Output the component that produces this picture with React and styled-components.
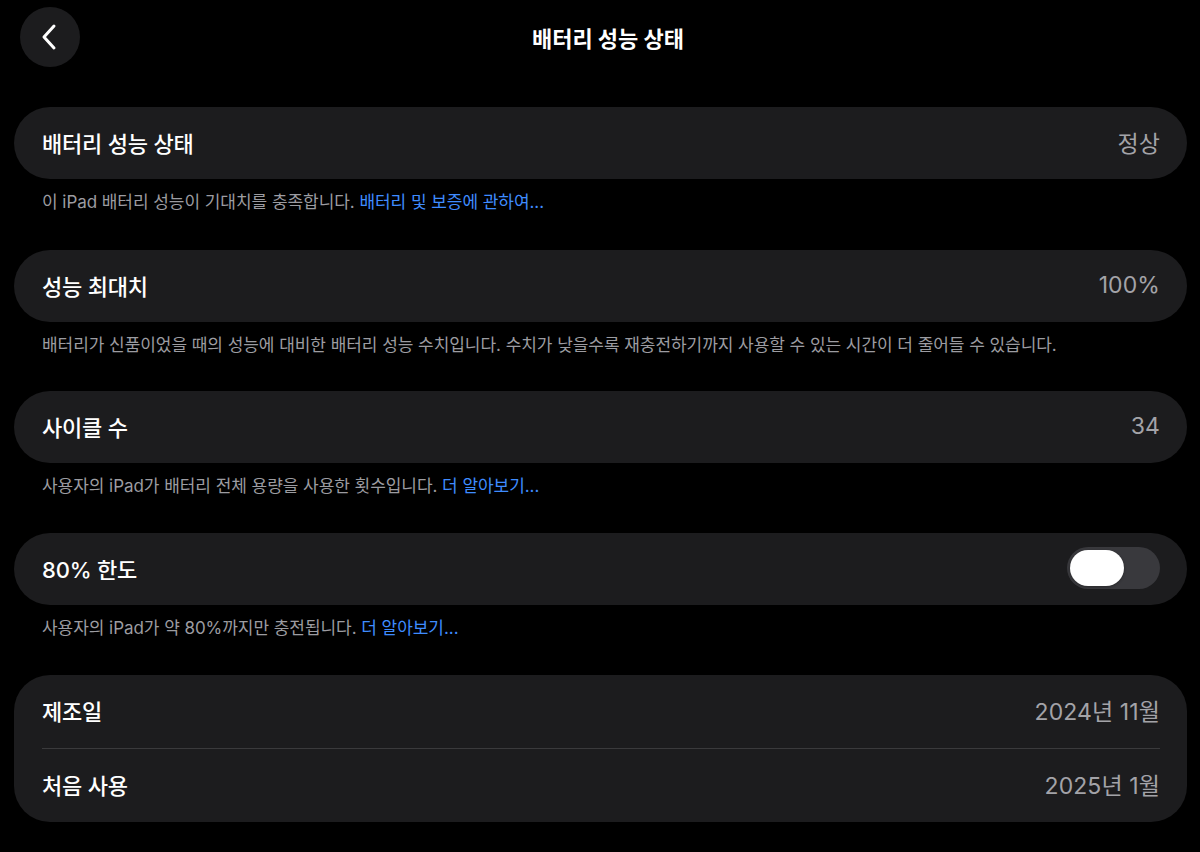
import React from "react";
import styled, { createGlobalStyle } from "styled-components";

const Global = createGlobalStyle`
  html, body { margin: 0; padding: 0; background: #000; }
  body {
    font-family: Inter, "Noto Sans CJK KR", sans-serif;
    color: #fff;
    -webkit-font-smoothing: antialiased;
  }
`;

const Page = styled.div`
  width: 1200px;
  height: 852px;
  background: #000;
  box-sizing: border-box;
  padding: 0 13px 0 14px;
  display: flex;
  flex-direction: column;
`;

const Header = styled.header`
  height: 74px;
  display: grid;
  grid-template-columns: 80px 1fr 80px;
  align-items: center;
`;

const BackButton = styled.button`
  width: 60px;
  height: 60px;
  margin-left: 6px;
  border-radius: 50%;
  border: none;
  background: #1c1c1e;
  display: flex;
  align-items: center;
  justify-content: center;
  padding: 0;
  cursor: pointer;
`;

const Title = styled.h1`
  margin: 0 0 0 15px;
  text-align: center;
  font-size: 22px;
  font-weight: 700;
  letter-spacing: 0;
`;

const Sections = styled.div`
  display: flex;
  flex-direction: column;
  padding-top: 33px;
`;

const Section = styled.section`
  display: flex;
  flex-direction: column;
  margin-bottom: ${(p) => p.$gap || 0}px;
`;

const Card = styled.div`
  background: #1c1c1e;
  border-radius: 36px;
  width: 1173px;
  display: flex;
  flex-direction: column;
  padding: 0 27px 0 28px;
  box-sizing: border-box;
`;

const Row = styled.div`
  height: ${(p) => p.$h || 72}px;
  display: flex;
  align-items: center;
  justify-content: space-between;
  border-top: ${(p) => (p.$divider ? "1px solid #3a3a3c" : "none")};
  box-sizing: border-box;
  padding-bottom: 3px;
`;

const Label = styled.span`
  font-size: 22px;
  font-weight: 500;
  color: #fff;
  letter-spacing: -0.2px;
`;

const Value = styled.span`
  font-size: 23px;
  font-weight: 400;
  color: #a3a3a8;
  letter-spacing: 0.1px;
`;

const Footer = styled.p`
  margin: 0;
  padding: 12px 28px 0;
  font-size: 17px;
  line-height: 22px;
  color: #9c9ca1;
  letter-spacing: -0.05px;
`;

const Link = styled.a`
  color: #3f8cff;
  text-decoration: none;
`;

const Track = styled.div`
  width: 93px;
  height: 42px;
  border-radius: 21px;
  background: #39393d;
  display: flex;
  align-items: center;
  padding: 0 3px;
  box-sizing: border-box;
`;

const Knob = styled.div`
  width: 54px;
  height: 36px;
  border-radius: 18px;
  background: #fff;
  box-shadow: 0 1px 3px rgba(0, 0, 0, 0.3);
`;

export default function App() {
  return (
    <>
      <Global />
      <Page>
        <Header>
          <BackButton aria-label="뒤로">
            <svg width="22" height="28" viewBox="0 0 22 28" fill="none">
              <path
                d="M15 3 L5 14 L15 25"
                stroke="#fff"
                strokeWidth="3"
                strokeLinecap="round"
                strokeLinejoin="round"
              />
            </svg>
          </BackButton>
          <Title>배터리 성능 상태</Title>
          <span />
        </Header>
        <Sections>
          <Section $gap={37}>
            <Card>
              <Row>
                <Label>배터리 성능 상태</Label>
                <Value>정상</Value>
              </Row>
            </Card>
            <Footer>
              이 iPad 배터리 성능이 기대치를 충족합니다.{" "}
              <Link>배터리 및 보증에 관하여...</Link>
            </Footer>
          </Section>
          <Section $gap={35}>
            <Card>
              <Row>
                <Label>성능 최대치</Label>
                <Value>100%</Value>
              </Row>
            </Card>
            <Footer>
              배터리가 신품이었을 때의 성능에 대비한 배터리 성능 수치입니다. 수치가
              낮을수록 재충전하기까지 사용할 수 있는 시간이 더 줄어들 수 있습니다.
            </Footer>
          </Section>
          <Section $gap={36}>
            <Card>
              <Row>
                <Label>사이클 수</Label>
                <Value>34</Value>
              </Row>
            </Card>
            <Footer>
              사용자의 iPad가 배터리 전체 용량을 사용한 횟수입니다.{" "}
              <Link>더 알아보기...</Link>
            </Footer>
          </Section>
          <Section $gap={36}>
            <Card>
              <Row>
                <Label>80% 한도</Label>
                <Track>
                  <Knob />
                </Track>
              </Row>
            </Card>
            <Footer>
              사용자의 iPad가 약 80%까지만 충전됩니다.{" "}
              <Link>더 알아보기...</Link>
            </Footer>
          </Section>
          <Section>
            <Card>
              <Row $h={73}>
                <Label>제조일</Label>
                <Value>2024년 11월</Value>
              </Row>
              <Row $h={74} $divider>
                <Label>처음 사용</Label>
                <Value>2025년 1월</Value>
              </Row>
            </Card>
          </Section>
        </Sections>
      </Page>
    </>
  );
}
